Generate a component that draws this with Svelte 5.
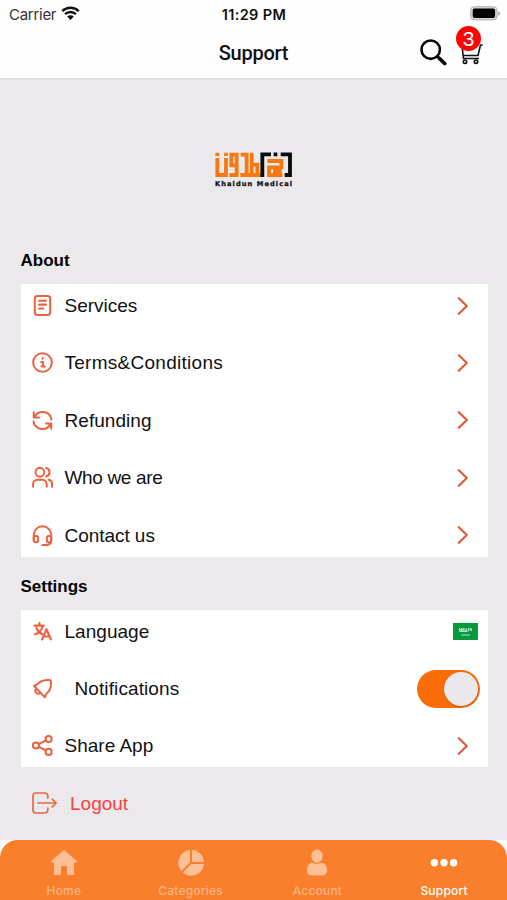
<script>
  const about = [
    { label: 'Services', icon: 'doc', spacing: 0 },
    { label: 'Terms&Conditions', icon: 'info', spacing: 0.27 },
    { label: 'Refunding', icon: 'refresh', spacing: 0.05 },
    { label: 'Who we are', icon: 'people', spacing: -0.35 },
    { label: 'Contact us', icon: 'headset', spacing: -0.05 }
  ];
  const settings = [
    { label: 'Language', icon: 'translate', end: 'flag', spacing: 0.03 },
    { label: 'Notifications', icon: 'bell', end: 'toggle', spacing: 0.1 },
    { label: 'Share App', icon: 'share', spacing: 0 }
  ];
  const tabs = ['Home', 'Categories', 'Account', 'Support'];
  let enabled = $state(true);
</script>

{#snippet icon(name)}
  <svg class="icon" viewBox="0 0 24 24">
    {#if name === 'doc'}
      <rect x="3.2" y="1.2" width="17.6" height="21.6" rx="3" /><path d="M8 6.500h8M8 11h8M8 15.500h5" />
    {:else if name === 'info'}
      <circle cx="12" cy="12" r="10.700" /><path d="M10.500 11.300h2v5M10.800 16.500h3.800M12.100 6.800v1" />
    {:else if name === 'refresh'}
      <path d="M2 2.500v6h6M2.800 8.300A10.200 10.200 0 0 1 22.200 11M22 21.500v-6h-6M21.200 15.700A10.200 10.200 0 0 1 1.800 13" />
    {:else if name === 'people'}
      <circle cx="9" cy="6" r="5" /><path d="M1.200 22.700v-3a5 5 0 0 1 5-5h5.600a5 5 0 0 1 5 5v3M16.200 1.200a5 5 0 0 1 0 9.700M19 14.700a4.800 4.800 0 0 1 3.900 4.700v3.300" />
    {:else if name === 'headset'}
      <path d="M2 17v-5.500a10 10 0 0 1 20 0V17M22 17.500c0 3.800-2.500 5.500-6.500 5.500H12" /><rect x="2" y="12.600" width="5" height="7.200" rx="2" /><rect x="17" y="12.600" width="5" height="7.200" rx="2" />
    {:else if name === 'translate'}
      <path d="M3 5.300h10.500M8.500 2.500v2.800M5 8c1.300 3.600 3.600 5.800 6.500 7M12 5.800c-.8 4.600-4 7.900-8.500 9.400M11.500 21 16.500 9.500 21.600 21M13.200 17.700h6.500" stroke-width="2.5" />
    {:else if name === 'bell'}
      <path d="M2.200 8.800C5.500 8.500 6.500 7 8.800 4.800 11.500 2.200 16 2 20 2.200q1.500 0 1.600 1.600c.3 4.500.2 8.500-2.400 11.300-2.300 2.500-4.200 3.700-4.500 7ZM5 11.800c-3 3.800.2 7.800 4.700 5.200" />
    {:else if name === 'share'}
      <circle cx="4.500" cy="12" r="3.500" /><circle cx="19" cy="4.700" r="3.500" /><circle cx="19" cy="19.300" r="3.500" /><path d="m7.700 10.400 8.200-4.100M7.700 13.600l8.200 4.100" />
    {/if}
  </svg>
{/snippet}

{#snippet card(items)}
  <div class="card">
    {#each items as item}
      <div class="row">
        {@render icon(item.icon)}
        <span class="label" class:shifted={item.end === 'toggle'} style:letter-spacing="{item.spacing}px">{item.label}</span>
        {#if item.end === 'flag'}
          <svg class="flag" viewBox="0 0 25 17">
            <rect width="25" height="17" fill="#079a3d" />
            <path d="M6.500 5v3h2V5M7 6.500h4M10 4.500v3.500h2V5M13.500 5.500V8h2V4.800M17 8V5.500h1.500V8M6.500 8.500H14M8 12h9" fill="none" stroke="#b5e2c5" />
          </svg>
        {:else if item.end === 'toggle'}
          <button class="toggle" class:off={!enabled} aria-label="Notifications" onclick={() => (enabled = !enabled)}><span></span></button>
        {:else}
          <svg class="chevron" viewBox="0 0 12 18"><path d="m1.800 1.200 8 7.800-8 7.800" /></svg>
        {/if}
      </div>
    {/each}
  </div>
{/snippet}

<div class="screen">
  <header>
    <div class="status">
      <div class="carrier">
        <span>Carrier</span>
        <svg width="19" height="15" viewBox="0 0 19 15">
          <path d="M1.300 5.200a11.600 11.600 0 0 1 16.400 0M4.100 8.200a7.600 7.600 0 0 1 10.800 0" fill="none" stroke="#111" stroke-width="2.400" />
          <path d="m6.200 10.600 3.300 3.400 3.300-3.400a4.700 4.700 0 0 0-6.600 0Z" fill="#111" />
        </svg>
      </div>
      <span class="time">11:29 PM</span>
      <svg class="battery" width="31" height="15" viewBox="0 0 31 15">
        <rect x=".7" y=".7" width="26.400" height="13.200" rx="3.500" fill="#d6d6d6" stroke="#b0b0b0" />
        <rect x="2.700" y="2.500" width="22.400" height="9.600" rx="2" fill="#000" />
        <path d="M28.400 5v5q3-2.500 0-5" fill="#999" />
      </svg>
    </div>
    <div class="titlebar">
      <h1>Support</h1>
      <div class="actions">
        <svg width="28" height="28" viewBox="0 0 28 28" fill="none" stroke="#080808">
          <circle cx="11.700" cy="10.700" r="9.200" stroke-width="2.600" />
          <path d="m18.500 17.500 2 2" stroke-width="2.600" /><path d="m20.500 19.500 5.200 5" stroke-width="3.800" stroke-linecap="round" />
        </svg>
        <div class="cart">
          <svg width="24" height="24" viewBox="0 0 24 24" fill="none" stroke="#111" stroke-width="1.600">
            <path d="M1 5h2l1.500 12.500H20M3.500 14.500h15.500L21.500 4h2.200" />
            <circle cx="6" cy="20.700" r="1.700" /><circle cx="17" cy="20.700" r="1.700" />
          </svg>
          <span class="badge">3</span>
        </div>
      </div>
    </div>
  </header>

  <main>
    <div class="logo">
      <svg width="78" height="39" viewBox="46 36 234 117">
        <g fill="none" stroke-width="11.500" stroke="#f97810">
          <path d="M53 54V105H79V54M53 38v10M79 38v10" />
          <path d="M111 76H95V44H111V105H89" />
          <path d="M123 44H141V105H122M156 38V105M122 105H183M156 74H173V105" />
          <path d="M203 63H245V82H208V105H248M226 84V93H246" />
        </g>
        <g fill="none" stroke-width="11.500" stroke="#0c0c0c">
          <path d="M188 111V43H214M222 43h11M243 43H271V105H255" />
        </g>
        <text x="46" y="138" textLength="231" font-family="DejaVu Sans, sans-serif" font-weight="bold" font-size="20" fill="#111" stroke="#111" stroke-width=".8">Khaldun Medical</text>
      </svg>
    </div>
    <h2>About</h2>
    {@render card(about)}
    <h2 class="second">Settings</h2>
    {@render card(settings)}
    <div class="logout">
      <svg width="26" height="22" viewBox="0 0 26 22">
        <path d="M15.800 6V4a3 3 0 0 0-3-3H4a3 3 0 0 0-3 3v14a3 3 0 0 0 3 3h8.800a3 3 0 0 0 3-3v-2M6 11h18M20.300 7.200 24.200 11l-3.900 3.800" />
      </svg>
      <span>Logout</span>
    </div>
  </main>

  <div class="dock">
    <nav>
      {#each tabs as tab, i}
        <div class="tab" class:active={i === 3}>
          <svg width="28" height="28" viewBox="0 0 28 28">
            {#if i === 0}
              <path d="M14 1 27.300 12.500q-.2 1-1.300 1H24V26H17V17h-6v9H4V13.500H2q-1.100 0-1.300-1Z" />
            {:else if i === 1}
              <path d="M13 1v12.300L4.200 22A13 13 0 0 1 13 1ZM15 1a13 13 0 0 1 12 12H15ZM27 15A13 13 0 0 1 5.600 23.400l8.500-8.400Z" />
            {:else if i === 2}
              <ellipse cx="14" cy="7.200" rx="5.700" ry="6.600" /><path d="M4 22c0-5 2-8.200 5.500-8.200q4.500 2 9 0C22 13.800 24 17 24 22c0 3-2 4.500-5 4.500H9c-3 0-5-1.500-5-4.500Z" />
            {:else}
              <circle cx="4.300" cy="13.700" r="3.700" /><circle cx="14" cy="13.700" r="3.700" /><circle cx="23.600" cy="13.700" r="3.700" />
            {/if}
          </svg>
          <span>{tab}</span>
        </div>
      {/each}
    </nav>
  </div>
</div>

<style>
  :global(body) { margin: 0; background: #ebe9ec; }
  .screen { display: flex; flex-direction: column; width: 507px; height: 900px; overflow: hidden; background: #ebe9ec; font-family: 'Liberation Sans', Arial, sans-serif; color: #111; }
  header { flex: none; box-sizing: border-box; height: 80px; background: #fefefe; border-bottom: 2px solid #dfdde0; }
  .status { display: grid; grid-template-columns: 1fr auto 1fr; align-items: center; height: 28px; padding: 0 6px 0 9px; font: 15px Inter, sans-serif; }
  .carrier { display: flex; align-items: center; gap: 5px; letter-spacing: -.28px; color: #333; }
  .carrier svg { margin-top: -2px; }
  .time { margin-left: -2px; font-weight: 600; font-size: 14.5px; letter-spacing: .35px; }
  .battery { justify-self: end; margin-top: -2px; }
  .titlebar { display: grid; grid-template-columns: 1fr auto 1fr; height: 50px; padding: 0 24px; align-items: center; }
  h1 { grid-column: 2; margin: 0; font: 500 20px Roboto, sans-serif; letter-spacing: -.25px; }
  .actions { display: flex; justify-content: flex-end; gap: 12px; align-items: center; }
  .cart { position: relative; width: 24px; height: 24px; }
  .cart svg { display: block; }
  .badge { position: absolute; left: -3px; top: -15px; width: 25px; height: 25px; border-radius: 50%; background: #fd0505; color: #fff; font-size: 21px; line-height: 26px; text-align: center; }
  main { flex: 1; padding: 0 20px 0 20.500px; }
  .logo { display: flex; justify-content: center; padding: 72px 0 59px; }
  .logo svg { display: block; }
  h2 { margin: 0; height: 34px; line-height: 21px; font-size: 17px; font-weight: bold; color: #050505; }
  .second { padding-top: 19px; }
  .card { display: flex; flex-direction: column; gap: 14.400px; width: 467px; background: #fff; }
  .row { display: flex; align-items: center; height: 43px; padding: 0 7px 0 11.500px; }
  .icon { width: 21px; height: 21px; margin-right: 11.500px; fill: none; stroke: #eb6240; stroke-width: 2.300; stroke-linecap: round; stroke-linejoin: round; }
  .label { flex: 1; font-size: 19px; line-height: 22px; padding-top: 1px; }
  .shifted { padding-left: 10px; }
  .chevron { width: 12px; height: 18px; margin-right: 12px; fill: none; stroke: #df5737; stroke-width: 2.100; stroke-linecap: round; stroke-linejoin: round; }
  .flag { width: 25px; height: 17px; margin-right: 3px; }
  .toggle { display: flex; justify-content: flex-end; box-sizing: border-box; width: 63px; height: 38px; margin: 1px .5px 0 0; padding: 2px; border: 0; border-radius: 19px; background: #f96c08; }
  .toggle.off { justify-content: flex-start; background: #bbb; }
  .toggle span { width: 34px; height: 34px; border-radius: 50%; background: #eae8eb; box-shadow: 0 1px 2px #8b340066; }
  .logout { display: flex; align-items: center; gap: 12px; height: 22px; padding: 25px 0 0 11.500px; font-size: 19px; color: #fb413d; }
  .logout svg { fill: none; stroke: #e96845; stroke-width: 1.700; stroke-linecap: round; stroke-linejoin: round; }
  .logout span { padding-top: 1px; }
  .dock { flex: none; background: #fafafa; }
  nav { display: flex; height: 60px; background: #f97f2d; border-radius: 18px 18px 0 0; }
  .tab { flex: 1; display: flex; flex-direction: column; align-items: center; padding: 9px 0 0 1px; color: #fdb384; font: 500 12px Inter, sans-serif; letter-spacing: .2px; }
  .tab svg { fill: #fdbf95; }
  .tab span { margin-top: 6px; line-height: 16px; }
  .active { color: #fff; }
  .active svg { fill: #fff; }
</style>
